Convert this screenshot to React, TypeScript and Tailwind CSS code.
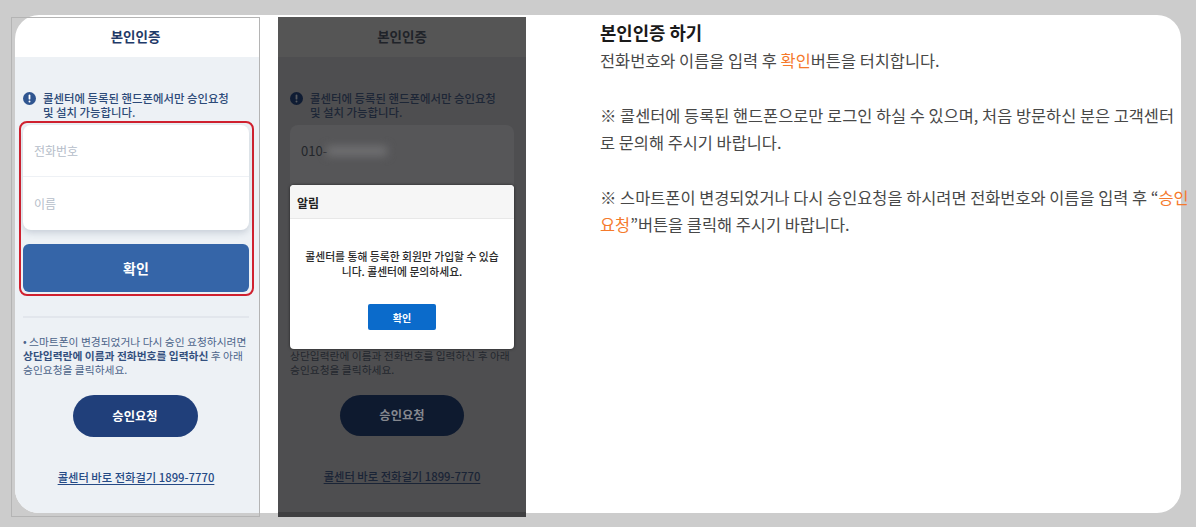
import { ReactNode } from 'react';

const FONT = "font-['Noto_Sans_CJK_KR','Noto_Sans',sans-serif]";

function AlertDot({ dark }: { dark?: boolean }) {
  return (
    <svg width="13" height="13" viewBox="0 0 13 13" className="shrink-0">
      <circle cx="6.5" cy="6.5" r="6.5" fill={dark ? '#0f1c33' : '#2f5590'} />
      <rect x="5.6" y="2.6" width="1.8" height="5" rx="0.9" fill={dark ? '#55585e' : '#ffffff'} />
      <circle cx="6.5" cy="9.6" r="1" fill={dark ? '#55585e' : '#ffffff'} />
    </svg>
  );
}

function Notice({ dark }: { dark?: boolean }) {
  return (
    <div className="flex gap-[7px]">
      <div className="pt-[1px]">
        <AlertDot dark={dark} />
      </div>
      <p
        className={`text-[11.4px] leading-[14px] font-medium whitespace-nowrap ${
          dark ? 'text-[#1d2636]' : 'text-[#2c4a78]'
        }`}
      >
        콜센터에 등록된 핸드폰에서만 승인요청
        <br />및 설치 가능합니다.
      </p>
    </div>
  );
}

function CallLink({ dark }: { dark?: boolean }) {
  return (
    <a
      className={`text-[11.3px] leading-[16px] font-medium underline underline-offset-2 whitespace-nowrap ${
        dark ? 'text-[#1a2436]' : 'text-[#254a85]'
      }`}
    >
      콜센터 바로 전화걸기 1899-7770
    </a>
  );
}

function Para({ children }: { children: ReactNode }) {
  return <p className="mt-[28px] whitespace-nowrap">{children}</p>;
}

function LightPhone() {
  return (
    <div className="-ml-[4px] mt-[2px] h-[500px] w-[249px] shrink-0 border border-[#b4b4b4] pl-[3px] flex flex-col">
      <div className="h-[39px] shrink-0 pb-[2px] pr-[3px] flex items-center justify-center text-[13.5px] font-bold text-[#1f3a68]">
        본인인증
      </div>
      <div className="h-[456px] bg-[#edf1f5] rounded-bl-[24px] pl-[8px] pr-[10px] flex flex-col">
        <div className="mt-[34px]">
          <Notice />
        </div>
        <div className="-ml-[4px] -mr-[5px] mt-[2px] border-2 border-[#d0212f] rounded-[8px] pl-[2px] pr-[3px] py-[2px]">
          <div className="bg-white rounded-[8px] shadow-[0_3px_6px_rgba(60,80,110,0.2)] h-[105px] flex flex-col text-[12px] text-[#b5bdc9]">
            <div className="h-[52px] border-b border-[#eef1f5] pl-[11px] flex items-center">전화번호</div>
            <div className="flex-1 pl-[11px] flex items-center">이름</div>
          </div>
          <div className="mt-[14px] h-[48px] bg-[#3565a8] rounded-[6px] flex items-center justify-center text-white text-[14px] font-bold">
            확인
          </div>
        </div>
        <div className="mt-[20px] h-[2px] bg-[#e2e6ec]" />
        <p className="mt-[17px] text-[10.75px] leading-[14px] text-[#4c648a] whitespace-nowrap">
          • 스마트폰이 변경되었거나 다시 승인 요청하시려면
          <br />
          <span className="font-semibold text-[#34507e]">상단입력란에 이름과 전화번호를 입력하신</span> 후 아래
          <br />
          승인요청을 클릭하세요.
        </p>
        <div className="mt-[18px] mr-[2px] self-center w-[125px] h-[42px] rounded-full bg-[#203f7a] flex items-center justify-center text-white text-[12.3px] font-semibold">
          승인요청
        </div>
        <div className="mt-[26px] self-center">
          <CallLink />
        </div>
      </div>
    </div>
  );
}

function DarkPhone() {
  return (
    <div className="relative ml-[18px] mt-[2px] h-[500px] w-[248px] shrink-0 bg-[#4e4e50] flex flex-col">
      <div className="h-[40px] shrink-0 pb-[2px] bg-[#555555] flex items-center justify-center text-[13.5px] font-bold text-[#1f2329]">
        본인인증
      </div>
      <div className="flex-1 px-[12px] flex flex-col">
        <div className="mt-[34px]">
          <Notice dark />
        </div>
        <div className="mt-[6px] h-[105px] bg-[#565658] rounded-[8px] pl-[11px] pt-[16px] flex items-start text-[13px] text-[#23262b]">
          <span>010-</span>
          <span className="mt-[5px] h-[10px] w-[60px] bg-[#707072] blur-[4px]" />
        </div>
        <p className="mt-[119px] text-[10.75px] leading-[14px] text-[#23272e] whitespace-nowrap">
          상단입력란에 이름과 전화번호를 입력하신 후 아래
          <br />
          승인요청을 클릭하세요.
        </p>
        <div className="mt-[18px] self-center w-[124px] h-[41px] rounded-full bg-[#0e1a2f] flex items-center justify-center text-[#85888f] text-[12.3px] font-semibold">
          승인요청
        </div>
        <div className="mt-[26px] self-center">
          <CallLink dark />
        </div>
      </div>
      <div className="h-[5px] bg-[#3f3f41]" />

      {/* alert dialog */}
      <div className="absolute left-[12px] top-[168px] w-[224px] h-[164px] bg-white rounded-[4px] shadow-[0_0_3px_rgba(0,0,0,0.6)] flex flex-col">
        <div className="h-[34px] pt-[2px] bg-[#f6f6f6] rounded-t-[4px] border-b border-[#e8e8e8] pl-[7px] flex items-center text-[12px] font-bold text-[#222222]">
          알림
        </div>
        <p className="mt-[30px] text-center text-[10.8px] leading-[14.5px] font-medium text-[#2b2b2b]">
          콜센터를 통해 등록한 회원만 가입할 수 있습
          <br />
          니다. 콜센터에 문의하세요.
        </p>
        <div className="mt-[26px] self-center w-[68px] h-[26px] bg-[#0b6bcb] rounded-[2px] flex items-center justify-center text-white text-[10px] font-bold">
          확인
        </div>
      </div>
    </div>
  );
}

export default function App() {
  return (
    <div className={`${FONT} w-[1196px] h-[527px] overflow-hidden bg-[#cccccc] pt-[15px] pl-[15px]`}>
      <div className="w-[1166px] h-[498px] bg-white rounded-[24px] flex items-start">
        <LightPhone />
        <DarkPhone />
        <div className="ml-[74px] mt-[2px] w-[590px] shrink-0 text-[16.4px] leading-[27px] text-[#484848]">
          <h2 className="text-[17.8px] leading-[30px] font-bold text-[#1a1a1a]">본인인증 하기</h2>
          <p className="whitespace-nowrap">
            전화번호와 이름을 입력 후 <span className="text-[#f57a2c]">확인</span>버튼을 터치합니다.
          </p>
          <Para>
            ※ 콜센터에 등록된 핸드폰으로만 로그인 하실 수 있으며, 처음 방문하신 분은 고객센터
            <br />로 문의해 주시기 바랍니다.
          </Para>
          <Para>
            ※ 스마트폰이 변경되었거나 다시 승인요청을 하시려면 전화번호와 이름을 입력 후 “
            <span className="text-[#f57a2c]">승인</span>
            <br />
            <span className="text-[#f57a2c]">요청</span>”버튼을 클릭해 주시기 바랍니다.
          </Para>
        </div>
      </div>
    </div>
  );
}
